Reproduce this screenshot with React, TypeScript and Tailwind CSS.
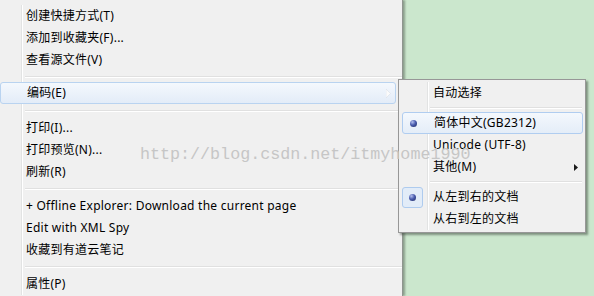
import React from "react";

const FONT = { fontFamily: '"Noto Sans", "Noto Sans CJK SC", sans-serif' };

type Item =
  | { kind: "row"; label: string; hot?: boolean; arrow?: boolean }
  | { kind: "sep"; h: number };

const mainItems: Item[] = [
  { kind: "row", label: "创建快捷方式(T)" },
  { kind: "row", label: "添加到收藏夹(F)..." },
  { kind: "row", label: "查看源文件(V)" },
  { kind: "sep", h: 11 },
  { kind: "row", label: "编码(E)", hot: true, arrow: true },
  { kind: "sep", h: 13 },
  { kind: "row", label: "打印(I)..." },
  { kind: "row", label: "打印预览(N)..." },
  { kind: "row", label: "刷新(R)" },
  { kind: "sep", h: 12 },
  { kind: "row", label: "+ Offline Explorer: Download the current page" },
  { kind: "row", label: "Edit with XML Spy" },
  { kind: "row", label: "收藏到有道云笔记" },
  { kind: "sep", h: 12 },
  { kind: "row", label: "属性(P)" },
];

function Bullet() {
  return (
    <span className="block w-[7px] h-[7px] rounded-full bg-[radial-gradient(circle_at_35%_30%,#b4c0ee_0%,#4a5cae_45%,#1c275e_100%)]" />
  );
}

function MainMenu() {
  return (
    <div className="w-[403px] h-full bg-[#f0f0f0] border-r-[1px] border-[#8f958f] shadow-[2px_0_2px_rgba(60,70,60,0.45)] pt-[5px] flex flex-col shrink-0">
      {mainItems.map((it, i) =>
        it.kind === "sep" ? (
          <div key={i} className="flex items-center" style={{ height: it.h }}>
            <div className="w-[23px] h-full border-r border-white shadow-[inset_-1px_0_0_#e2e3e3]" />
            <div className="flex-1 ml-[2px] flex flex-col">
              <div className="h-px bg-[#e0e0e0]" />
              <div className="h-px bg-white" />
            </div>
          </div>
        ) : it.hot ? (
          <div
            key={i}
            className="h-[22px] mr-[6px] flex items-center rounded-[3px] border border-[#b9d3f0] bg-gradient-to-b from-[#f4f8fd] to-[#e3ecf8]"
          >
            <div className="w-[26px]" />
            <span className="text-[12px] tracking-[0.25px] text-black leading-none">{it.label}</span>
            <div className="flex-1" />
            <svg width="5" height="9" viewBox="0 0 5 9" className="mr-[4px]">
              <path d="M0 0 L4.5 4.5 L0 9 Z" fill="#fbfbfb" stroke="#d4dbe4" strokeWidth="0.5" />
            </svg>
          </div>
        ) : (
          <div key={i} className="h-[22px] flex items-center">
            <div className="w-[23px] h-full border-r border-white shadow-[inset_-1px_0_0_#e2e3e3]" />
            <span className="pl-[3px] text-[12px] tracking-[0.25px] text-black leading-none whitespace-nowrap">{it.label}</span>
          </div>
        )
      )}
    </div>
  );
}

type SubItem =
  | { kind: "row"; label: string; bullet?: boolean; hot?: boolean; boxed?: boolean; arrow?: boolean }
  | { kind: "sep" };

const subItems: SubItem[] = [
  { kind: "row", label: "自动选择" },
  { kind: "sep" },
  { kind: "row", label: "简体中文(GB2312)", bullet: true, hot: true },
  { kind: "row", label: "Unicode (UTF-8)" },
  { kind: "row", label: "其他(M)", arrow: true },
  { kind: "sep" },
  { kind: "row", label: "从左到右的文档", bullet: true, boxed: true },
  { kind: "row", label: "从右到左的文档" },
];

function SubMenu() {
  return (
    <div className="absolute left-[398px] top-[79px] w-[188px] bg-[#f0f0f0] border border-[#979797] shadow-[2px_2px_2px_rgba(50,60,50,0.5)] p-[2px] pl-[3px] pr-[3px]">
      <div className="flex flex-col">
        {subItems.map((it, i) =>
          it.kind === "sep" ? (
            <div key={i} className="h-[8px] flex items-center">
              <div className="w-[27px] h-full border-r border-white shadow-[inset_-1px_0_0_#e2e3e3]" />
              <div className="flex-1 ml-[1px] flex flex-col">
                <div className="h-px bg-[#e0e0e0]" />
                <div className="h-px bg-white" />
              </div>
            </div>
          ) : (
            <div
              key={i}
              className={
                "relative h-[22px] flex items-center " +
                (it.hot
                  ? "rounded-[3px] border border-[#b0cdf0] bg-gradient-to-b from-[#f4f8fd] to-[#e4edf8] -mr-px"
                  : "")
              }
            >
              <div
                className={
                  "w-[27px] h-full flex items-center " +
                  (it.hot ? "" : "border-r border-white shadow-[inset_-1px_0_0_#e2e3e3]")
                }
              >
                {it.bullet && (
                  <div
                    className={
                      "w-[21px] h-[21px] flex items-center justify-center rounded-[3px] " +
                      (it.boxed ? "border border-[#aecbee] bg-[#e2ecf8]" : "")
                    }
                  >
                    <Bullet />
                  </div>
                )}
              </div>
              <span className="pl-[4px] text-[12px] tracking-[0.25px] text-black leading-none whitespace-nowrap">
                {it.label}
              </span>
              <div className="flex-1" />
              {it.arrow && (
                <svg width="4" height="7" viewBox="0 0 4 7" className="mr-[4px]">
                  <path d="M0 0 L4 3.5 L0 7 Z" fill="#1a1a1a" />
                </svg>
              )}
            </div>
          )
        )}
      </div>
    </div>
  );
}

export default function App() {
  return (
    <div className="relative w-[594px] h-[296px] overflow-hidden bg-[#cbe7cd] flex" style={FONT}>
      <MainMenu />
      <SubMenu />
      <div
        className="absolute left-[140px] top-[147px] text-[16.7px] leading-none text-[#c6c6c6] whitespace-nowrap pointer-events-none"
        style={{ fontFamily: '"Liberation Mono", monospace' }}
      >
        http://blog.csdn.net/itmyhome1990
      </div>
    </div>
  );
}
